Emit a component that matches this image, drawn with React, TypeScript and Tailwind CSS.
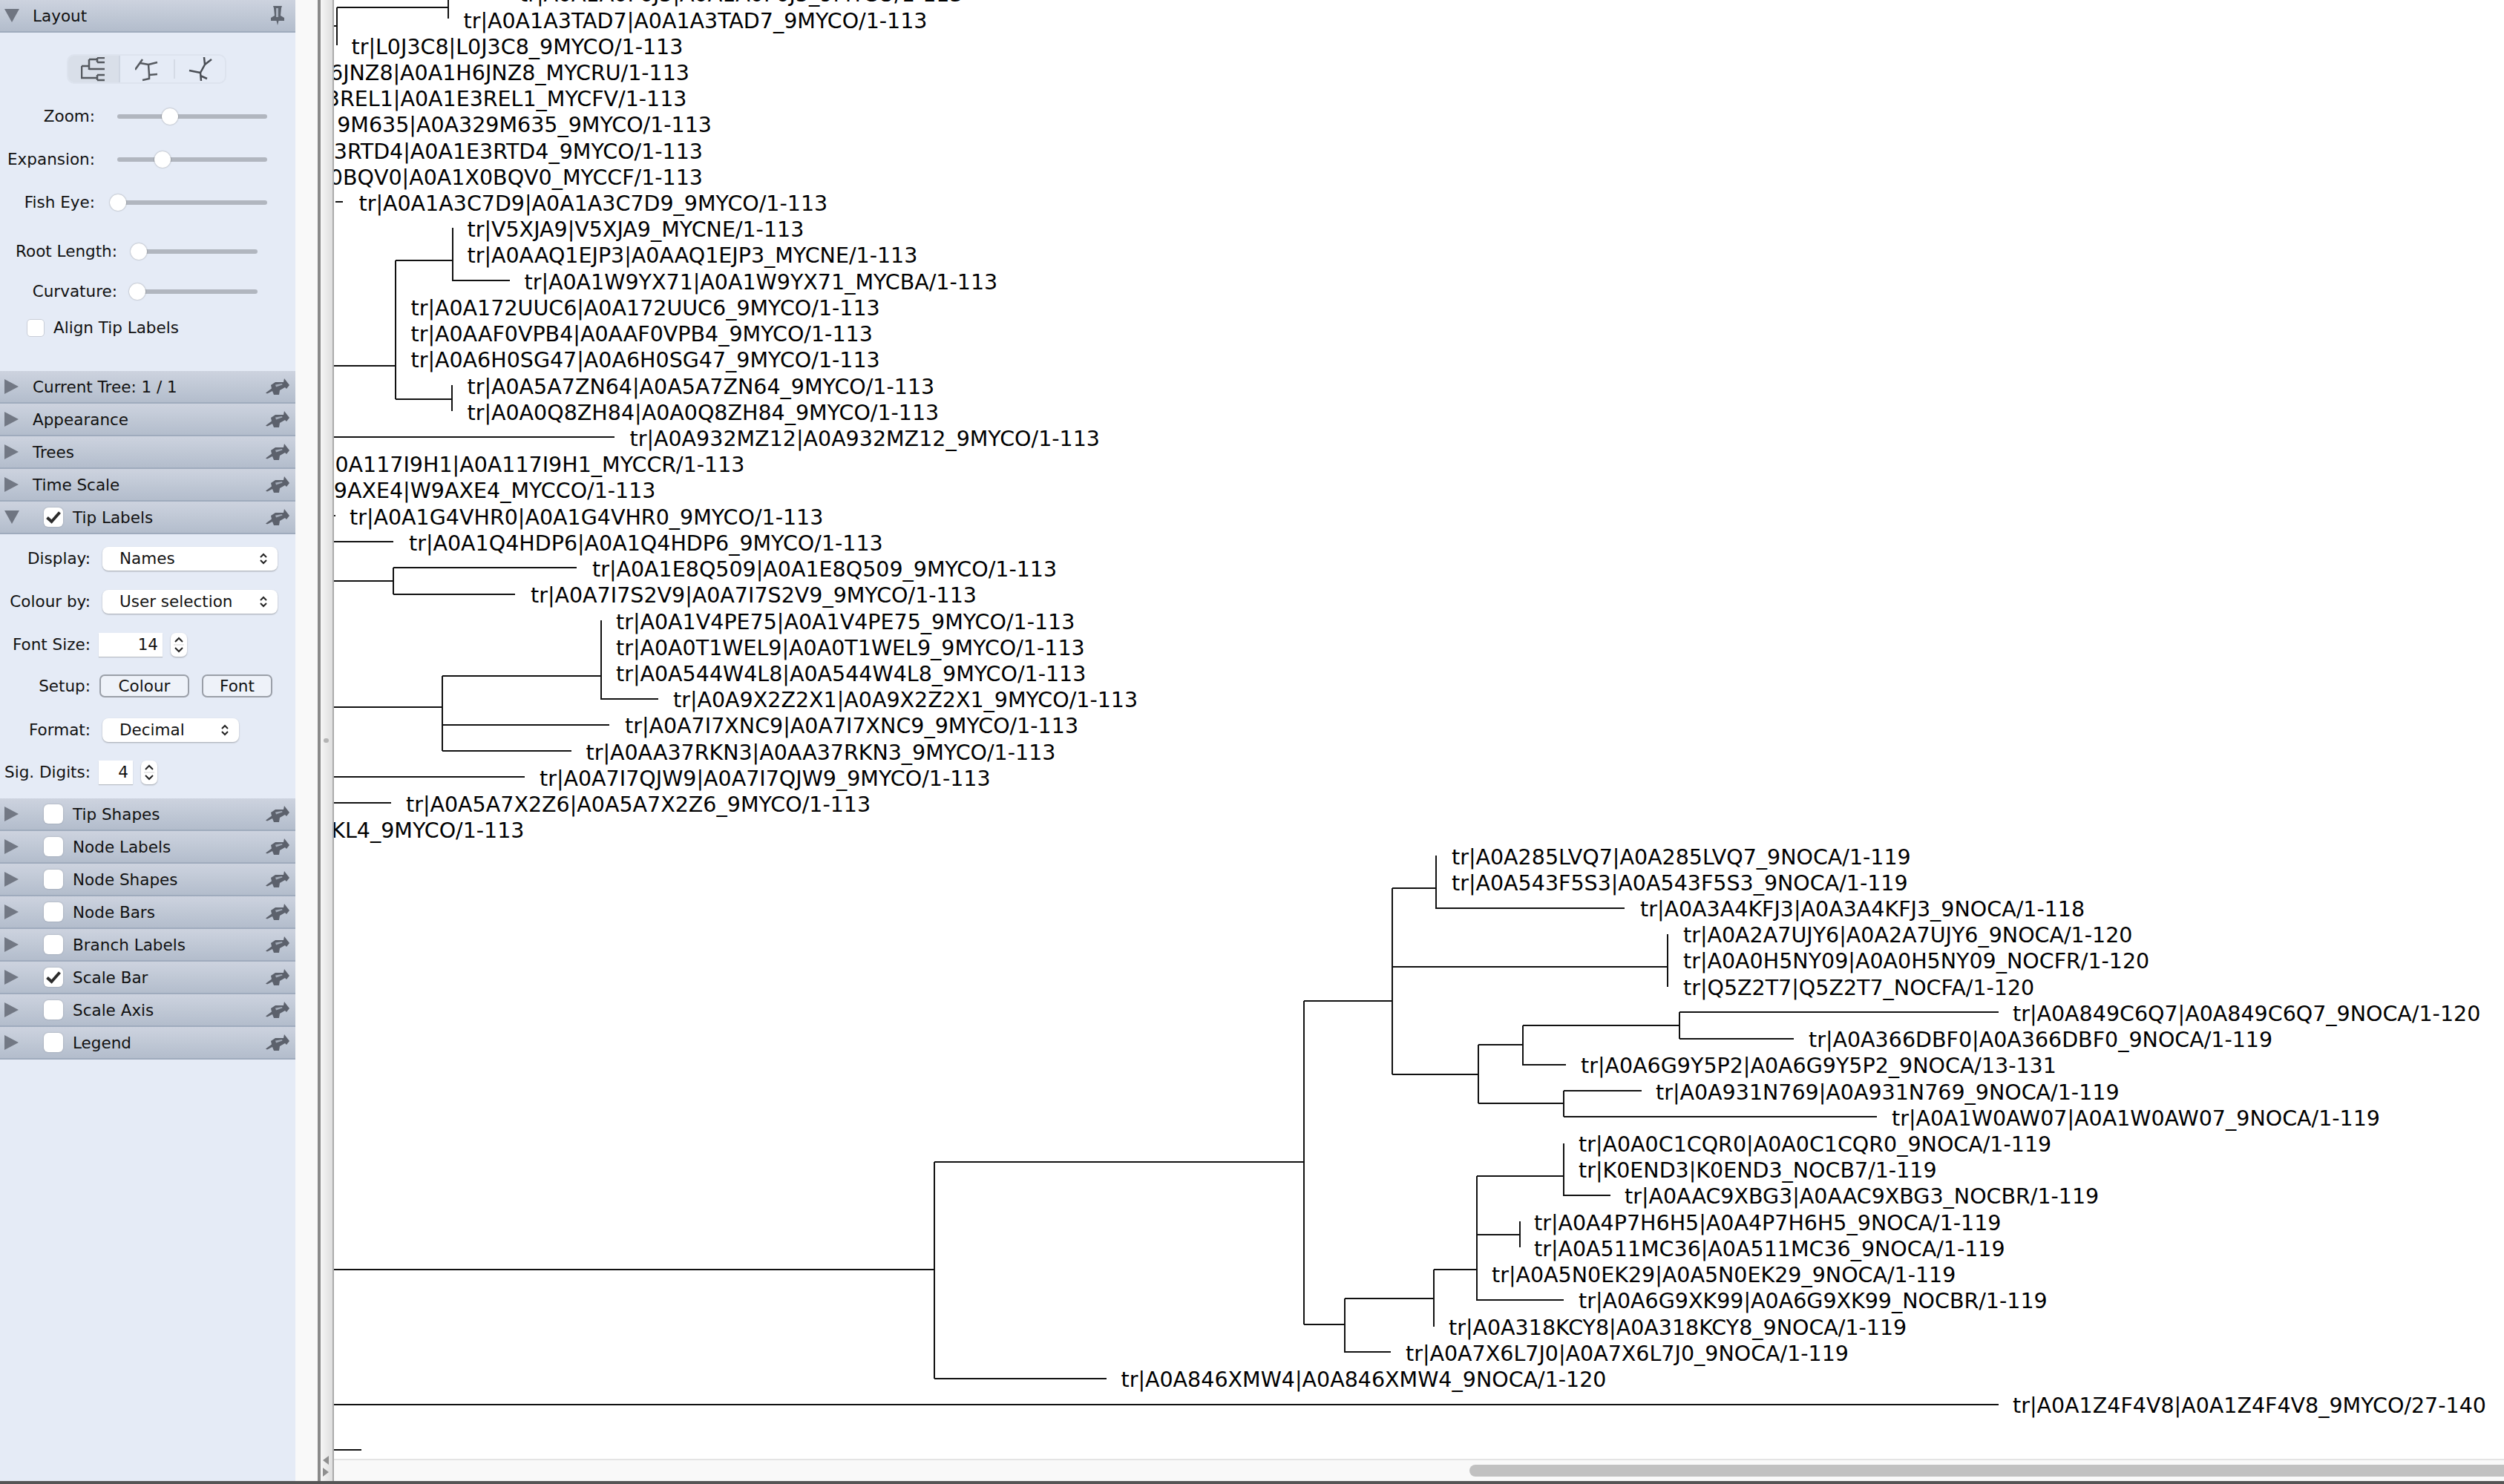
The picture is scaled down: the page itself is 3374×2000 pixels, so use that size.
const FONT = 'font-["DejaVu_Sans",sans-serif]'

const baseY = (i: number) => 37.5 + 35.22 * i

// [row, x, text, anchored at its right end]
const labels: [number, number, string, boolean?][] = [
  [-1, 700, 'tr|A0A1A0F6J5|A0A1A0F6J5_9MYCO/1-113'],
  [0, 624.5, 'tr|A0A1A3TAD7|A0A1A3TAD7_9MYCO/1-113'],
  [1, 473.5, 'tr|L0J3C8|L0J3C8_9MYCO/1-113'],
  [2, 929, '6JNZ8|A0A1H6JNZ8_MYCRU/1-113', true],
  [3, 925.5, '3REL1|A0A1E3REL1_MYCFV/1-113', true],
  [4, 959, '9M635|A0A329M635_9MYCO/1-113', true],
  [5, 947, '3RTD4|A0A1E3RTD4_9MYCO/1-113', true],
  [6, 947, '0BQV0|A0A1X0BQV0_MYCCF/1-113', true],
  [7, 483.5, 'tr|A0A1A3C7D9|A0A1A3C7D9_9MYCO/1-113'],
  [8, 629.5, 'tr|V5XJA9|V5XJA9_MYCNE/1-113'],
  [9, 629.5, 'tr|A0AAQ1EJP3|A0AAQ1EJP3_MYCNE/1-113'],
  [10, 706.5, 'tr|A0A1W9YX71|A0A1W9YX71_MYCBA/1-113'],
  [11, 553.5, 'tr|A0A172UUC6|A0A172UUC6_9MYCO/1-113'],
  [12, 553.5, 'tr|A0AAF0VPB4|A0AAF0VPB4_9MYCO/1-113'],
  [13, 553.5, 'tr|A0A6H0SG47|A0A6H0SG47_9MYCO/1-113'],
  [14, 629.5, 'tr|A0A5A7ZN64|A0A5A7ZN64_9MYCO/1-113'],
  [15, 629.5, 'tr|A0A0Q8ZH84|A0A0Q8ZH84_9MYCO/1-113'],
  [16, 848.5, 'tr|A0A932MZ12|A0A932MZ12_9MYCO/1-113'],
  [17, 1003.5, '0A117I9H1|A0A117I9H1_MYCCR/1-113', true],
  [18, 883.5, 'W9AXE4|W9AXE4_MYCCO/1-113', true],
  [19, 471, 'tr|A0A1G4VHR0|A0A1G4VHR0_9MYCO/1-113'],
  [20, 551, 'tr|A0A1Q4HDP6|A0A1Q4HDP6_9MYCO/1-113'],
  [21, 798, 'tr|A0A1E8Q509|A0A1E8Q509_9MYCO/1-113'],
  [22, 715, 'tr|A0A7I7S2V9|A0A7I7S2V9_9MYCO/1-113'],
  [23, 830, 'tr|A0A1V4PE75|A0A1V4PE75_9MYCO/1-113'],
  [24, 830, 'tr|A0A0T1WEL9|A0A0T1WEL9_9MYCO/1-113'],
  [25, 830, 'tr|A0A544W4L8|A0A544W4L8_9MYCO/1-113'],
  [26, 907, 'tr|A0A9X2Z2X1|A0A9X2Z2X1_9MYCO/1-113'],
  [27, 842, 'tr|A0A7I7XNC9|A0A7I7XNC9_9MYCO/1-113'],
  [28, 789.5, 'tr|A0AA37RKN3|A0AA37RKN3_9MYCO/1-113'],
  [29, 727, 'tr|A0A7I7QJW9|A0A7I7QJW9_9MYCO/1-113'],
  [30, 547, 'tr|A0A5A7X2Z6|A0A5A7X2Z6_9MYCO/1-113'],
  [31, 706.5, 'KL4_9MYCO/1-113', true],
  [32, 1956, 'tr|A0A285LVQ7|A0A285LVQ7_9NOCA/1-119'],
  [33, 1956, 'tr|A0A543F5S3|A0A543F5S3_9NOCA/1-119'],
  [34, 2210, 'tr|A0A3A4KFJ3|A0A3A4KFJ3_9NOCA/1-118'],
  [35, 2268, 'tr|A0A2A7UJY6|A0A2A7UJY6_9NOCA/1-120'],
  [36, 2268, 'tr|A0A0H5NY09|A0A0H5NY09_NOCFR/1-120'],
  [37, 2268, 'tr|Q5Z2T7|Q5Z2T7_NOCFA/1-120'],
  [38, 2712, 'tr|A0A849C6Q7|A0A849C6Q7_9NOCA/1-120'],
  [39, 2437, 'tr|A0A366DBF0|A0A366DBF0_9NOCA/1-119'],
  [40, 2130, 'tr|A0A6G9Y5P2|A0A6G9Y5P2_9NOCA/13-131'],
  [41, 2231, 'tr|A0A931N769|A0A931N769_9NOCA/1-119'],
  [42, 2549, 'tr|A0A1W0AW07|A0A1W0AW07_9NOCA/1-119'],
  [43, 2127, 'tr|A0A0C1CQR0|A0A0C1CQR0_9NOCA/1-119'],
  [44, 2127, 'tr|K0END3|K0END3_NOCB7/1-119'],
  [45, 2189, 'tr|A0AAC9XBG3|A0AAC9XBG3_NOCBR/1-119'],
  [46, 2067, 'tr|A0A4P7H6H5|A0A4P7H6H5_9NOCA/1-119'],
  [47, 2067, 'tr|A0A511MC36|A0A511MC36_9NOCA/1-119'],
  [48, 2010, 'tr|A0A5N0EK29|A0A5N0EK29_9NOCA/1-119'],
  [49, 2127, 'tr|A0A6G9XK99|A0A6G9XK99_NOCBR/1-119'],
  [50, 1952, 'tr|A0A318KCY8|A0A318KCY8_9NOCA/1-119'],
  [51, 1894, 'tr|A0A7X6L7J0|A0A7X6L7J0_9NOCA/1-119'],
  [52, 1510.5, 'tr|A0A846XMW4|A0A846XMW4_9NOCA/1-120'],
  [53, 2712, 'tr|A0A1Z4F4V8|A0A1Z4F4V8_9MYCO/27-140'],
]

// branch polylines in page coordinates, canvas starts at x=450
const branches = [
  'M604 0V25', 'M454 10H604', 'M454 10V61', 'M450 35H454', 'M452 272H462',
  'M610 307V378H687', 'M533 351H610', 'M533 351V538', 'M450 493H533', 'M533 538H609', 'M609 519V554',
  'M450 589H828', 'M450 695H452', 'M450 730H530',
  'M450 783H530', 'M530 765V801', 'M530 765H777', 'M530 801H694',
  'M810 836V942H887', 'M596 911H810', 'M596 911V1012', 'M450 953H596', 'M596 977H821', 'M596 1012H770',
  'M450 1047H707', 'M450 1082H527',
  'M450 1711H1259', 'M1259 1566V1858', 'M1259 1858H1491', 'M1259 1566H1757', 'M450 1893H2693',
  'M1757 1349V1785', 'M1757 1349H1876', 'M1876 1197V1448', 'M1876 1197H1935', 'M1935 1153V1224H2189',
  'M1876 1303H2247', 'M2247 1259V1330',
  'M1876 1448H1992', 'M1992 1408V1487', 'M1992 1408H2052', 'M2052 1382V1435H2110', 'M2052 1382H2263',
  'M2263 1364V1400', 'M2263 1364H2693', 'M2263 1400H2417',
  'M1992 1487H2107', 'M2107 1470V1505', 'M2107 1470H2212', 'M2107 1505H2529',
  'M1757 1785H1812', 'M1812 1750V1822H1874', 'M1812 1750H1932', 'M1932 1711V1788', 'M1932 1711H1990',
  'M1990 1585V1752H2107', 'M1990 1585H2107', 'M2107 1541V1611H2170',
  'M1990 1664H2048', 'M2048 1646V1681',
  'M450 1954H487',
]

const RightArrow = () => (
  <svg width="19" height="20" viewBox="0 0 19 20" className="shrink-0">
    <path d="M0 0L19 10L0 20Z" fill="#727884" />
  </svg>
)

const DownArrow = () => (
  <svg width="20" height="18" viewBox="0 0 20 18" className="shrink-0">
    <path d="M0 0H20L10 18Z" fill="#6f7581" />
  </svg>
)

const Pin = () => (
  <svg width="32" height="22" viewBox="0 0 32 22">
    <path d="M0 19.500L8 13.500L7 9L13 5L24 5L25 0L32 9L28 14L26 12L19 16L18 22L11 22L9 17L2 20.500Z" fill="#5c616c" />
    <path d="M13 8.500L22 7L22.500 8.500L14 11.500Z" fill="#a4acb9" />
  </svg>
)

const PinDown = () => (
  <svg width="18" height="26" viewBox="0 0 18 26">
    <path d="M3 0H15L14 3L13 13L18 16V20H10.500L9 26L7.500 20H0V16L5 13L4 3Z" fill="#5f6570" />
    <path d="M7 3H10V15H7Z" fill="#a9b1be" />
  </svg>
)

const Check = () => (
  <svg width="22" height="18" viewBox="0 0 22 18">
    <path d="M2.500 9.500L8.500 15L19.500 2.500" fill="none" stroke="#2b2b2b" strokeWidth="4" />
  </svg>
)

const Checkbox = ({ checked }: { checked?: boolean }) => (
  <div className="flex h-[26px] w-[26px] shrink-0 items-center justify-center rounded-[6px] bg-white shadow-[0_0_2px_rgba(0,0,0,0.25)]">
    {checked && <Check />}
  </div>
)

const Header = ({ title, open, check, checked, pinned }: { title: string; open?: boolean; check?: boolean; checked?: boolean; pinned?: boolean }) => (
  <div className="flex h-[44px] items-center border-b-2 border-[#9fabbd] bg-gradient-to-b from-[#cdd3df] to-[#b3bdcc] pl-[6px] pr-[8px]">
    <div className="flex w-[38px] shrink-0 items-center">{open ? <DownArrow /> : <RightArrow />}</div>
    {check && (
      <div className="ml-[15px] mr-[13px]">
        <Checkbox checked={checked} />
      </div>
    )}
    <span className="flex-1 pt-[3px] text-[21.5px] text-[#111]">{title}</span>
    <div className="flex w-[32px] justify-center">{pinned ? <PinDown /> : <Pin />}</div>
  </div>
)

const SliderRow = ({ label, labelW, gap, trackW, thumb, h }: { label: string; labelW: string; gap: string; trackW: string; thumb: number; h: string }) => (
  <div className={`flex items-center ${h}`}>
    <span className={`text-right text-[21.5px] text-[#111] ${labelW}`}>{label}</span>
    <div className={`relative h-[6px] rounded-full bg-[#b1b6bf] ${gap} ${trackW}`}>
      <div
        className="absolute top-[-8px] h-[22px] w-[22px] rounded-full bg-white shadow-[0_0_2px_rgba(0,0,0,0.4)]"
        style={{ left: thumb - 11 }}
      />
    </div>
  </div>
)

const SelectBox = ({ text, w }: { text: string; w: string }) => (
  <div className={`flex h-[32px] items-center justify-between rounded-[8px] bg-white pl-[23px] pr-[13px] shadow-[0_1px_2px_rgba(0,0,0,0.3)] ${w}`}>
    <span className="text-[21.5px] text-[#111]">{text}</span>
    <svg width="12" height="18" viewBox="0 0 12 18">
      <path d="M2 7L6 3L10 7M2 11L6 15L10 11" fill="none" stroke="#222" strokeWidth="2" />
    </svg>
  </div>
)

const Spinner = () => (
  <div className="ml-[11px] flex h-[32px] w-[22px] flex-col items-center justify-center rounded-[7px] bg-white shadow-[0_1px_2px_rgba(0,0,0,0.3)]">
    <svg width="14" height="26" viewBox="0 0 14 26">
      <path d="M2 9L7 4L12 9M2 17L7 22L12 17" fill="none" stroke="#222" strokeWidth="2" />
      <path d="M0 13H14" stroke="#d5d5d5" strokeWidth="1" />
    </svg>
  </div>
)

const NumberField = ({ value, w }: { value: string; w: string }) => (
  <div className={`ml-[11px] flex h-[32px] items-center justify-end bg-white pr-[6px] text-[21.5px] text-[#111] shadow-[0_1px_1px_rgba(0,0,0,0.2)] ${w}`}>
    {value}
  </div>
)

const FormLabel = ({ text }: { text: string }) => (
  <span className="w-[122px] shrink-0 text-right text-[21.5px] text-[#111]">{text}</span>
)

const OutlineButton = ({ text, w }: { text: string; w: string }) => (
  <div className={`flex h-[31px] items-center justify-center rounded-[7px] border-2 border-[#9a9fa8] bg-[#eef2f9] text-[21.5px] text-[#111] ${w}`}>
    {text}
  </div>
)

const LayoutBody = () => (
  <div className="h-[456px] pt-[29px]">
    <div className="ml-[90px] flex h-[40px] w-[215px] overflow-hidden rounded-[10px] border-2 border-[#dde3ee]">
      <div className="flex w-[70px] items-center justify-center border-r-2 border-[#cfd6e2] bg-[#d9dfe9]">
        <svg width="34" height="33" viewBox="0 0 34 33">
          <path d="M1 12V28H22M1 12H11M11 3V17M11 3H22M22 1V7M22 1H32M22 7H32M11 16H32M22 24V31M22 24H32M22 31H32" fill="none" stroke="#55595f" strokeWidth="2.500" />
        </svg>
      </div>
      <div className="flex w-[72px] items-center justify-center">
        <svg width="32" height="33" viewBox="0 0 32 33">
          <path d="M0 17L10 3M7 8L18 10M18 10L30 7M18 10L19 24M19 24L30 23M19 24V29L10 31" fill="none" stroke="#55595f" strokeWidth="2.500" />
        </svg>
      </div>
      <div className="my-[5px] w-[2px] bg-[#d5dbe6]" />
      <div className="flex flex-1 items-center justify-center">
        <svg width="34" height="33" viewBox="0 0 34 33">
          <path d="M2 18L17 21M17 21L23 10L22 0M23 10L32 3M17 21L18 32M17 25L26 29" fill="none" stroke="#4a4e55" strokeWidth="2.500" />
        </svg>
      </div>
    </div>
    <div className="mt-[15px]">
      <SliderRow label="Zoom:" labelW="w-[128px]" gap="ml-[30px]" trackW="w-[202px]" thumb={71} h="h-[58px]" />
      <SliderRow label="Expansion:" labelW="w-[128px]" gap="ml-[30px]" trackW="w-[202px]" thumb={61} h="h-[58px]" />
      <SliderRow label="Fish Eye:" labelW="w-[128px]" gap="ml-[30px]" trackW="w-[202px]" thumb={1} h="h-[58px]" />
    </div>
    <div className="mt-[10px]">
      <SliderRow label="Root Length:" labelW="w-[158px]" gap="ml-[29px]" trackW="w-[160px]" thumb={0} h="h-[54px]" />
      <SliderRow label="Curvature:" labelW="w-[158px]" gap="ml-[29px]" trackW="w-[160px]" thumb={-2} h="h-[54px]" />
    </div>
    <div className="ml-[36px] mt-[10px] flex h-[24px] items-center">
      <div className="h-[24px] w-[24px] rounded-[5px] border border-[#c9ced8] bg-white" />
      <span className="ml-[12px] text-[21.5px] text-[#111]">Align Tip Labels</span>
    </div>
  </div>
)

const TipLabelsBody = () => (
  <div className="h-[356px] pt-[17px]">
    <div className="flex items-center">
      <FormLabel text="Display:" />
      <SelectBox text="Names" w="ml-[16px] w-[236px]" />
    </div>
    <div className="mt-[26px] flex items-center">
      <FormLabel text="Colour by:" />
      <SelectBox text="User selection" w="ml-[16px] w-[236px]" />
    </div>
    <div className="mt-[25px] flex items-center">
      <FormLabel text="Font Size:" />
      <NumberField value="14" w="w-[86px]" />
      <Spinner />
    </div>
    <div className="mt-[24px] flex items-center">
      <FormLabel text="Setup:" />
      <div className="ml-[12px]">
        <OutlineButton text="Colour" w="w-[121px]" />
      </div>
      <div className="ml-[17px]">
        <OutlineButton text="Font" w="w-[95px]" />
      </div>
    </div>
    <div className="mt-[27px] flex items-center">
      <FormLabel text="Format:" />
      <SelectBox text="Decimal" w="ml-[16px] w-[184px]" />
    </div>
    <div className="mt-[25px] flex items-center">
      <FormLabel text="Sig. Digits:" />
      <NumberField value="4" w="w-[46px]" />
      <Spinner />
    </div>
  </div>
)

const Sidebar = () => (
  <div className="h-full w-[398px] shrink-0 bg-[#e5ebf6]">
    <Header title="Layout" open pinned />
    <LayoutBody />
    <Header title="Current Tree: 1 / 1" />
    <Header title="Appearance" />
    <Header title="Trees" />
    <Header title="Time Scale" />
    <Header title="Tip Labels" open check checked />
    <TipLabelsBody />
    <Header title="Tip Shapes" check />
    <Header title="Node Labels" check />
    <Header title="Node Shapes" check />
    <Header title="Node Bars" check />
    <Header title="Branch Labels" check />
    <Header title="Scale Bar" check checked />
    <Header title="Scale Axis" check />
    <Header title="Legend" check />
  </div>
)

const Splitter = () => (
  <div className="flex h-full shrink-0">
    <div className="w-[30px] bg-[#f9f9f9]" />
    <div className="w-[4px] bg-[#8a8a8a]" />
    <div className="relative w-[18px] border-r-2 border-[#ababab] bg-gradient-to-r from-[#f6f6f6] to-[#dedede]">
      <div className="absolute left-[4px] top-[995px] h-[6px] w-[7px] rounded-full bg-[#b4b4b4]" />
      <svg width="9" height="32" viewBox="0 0 9 32" className="absolute left-[3px] top-[1962px]">
        <path d="M8 0V12L0 6ZM0 16L8 22L0 28Z" fill="#8f8f8f" />
      </svg>
    </div>
  </div>
)

const TreeCanvas = () => (
  <div className="flex h-full min-w-0 flex-1 flex-col">
    <div className="min-h-0 flex-1 overflow-hidden bg-white">
      <svg width="2924" height="1966" viewBox="450 0 2924 1966" className={FONT}>
        {branches.map((d, i) => (
          <path key={i} d={d} fill="none" stroke="#111" strokeWidth="2" />
        ))}
        {labels.map(([row, x, text, end]) => (
          <text key={row} x={x} y={baseY(row)} fontSize="28.5" fill="#000" textAnchor={end ? 'end' : 'start'}>
            {text}
          </text>
        ))}
      </svg>
    </div>
    <div className="flex h-[30px] shrink-0 items-center border-t-2 border-[#e4e4e4] bg-[#f9f9f9] pl-[1530px]">
      <div className="h-[16px] w-full rounded-l-full bg-[#c1c1c1]" />
    </div>
  </div>
)

export default function App() {
  return (
    <div className={`flex h-[2000px] w-[3374px] overflow-hidden border-b-4 border-[#555] bg-white ${FONT}`}>
      <Sidebar />
      <Splitter />
      <TreeCanvas />
    </div>
  )
}
